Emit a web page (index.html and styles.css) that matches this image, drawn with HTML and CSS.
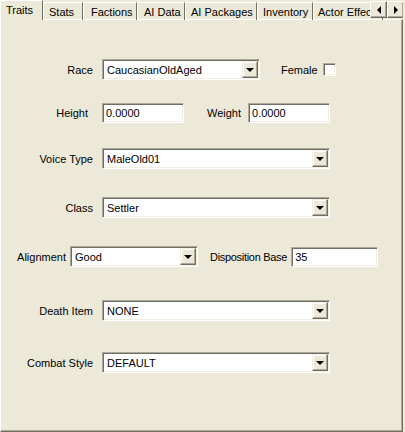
FILE: index.html
```html
<!DOCTYPE html>
<html lang="en">
<head>
  <meta charset="UTF-8">
  <title>Traits</title>
  <link rel="stylesheet" href="styles.css">
</head>
<body>
  <div class="window">
    <div class="tabs">
      <div class="tab active w-traits">Traits</div>
      <div class="tab w-stats">Stats</div>
      <div class="tab w-factions">Factions</div>
      <div class="tab w-aidata">AI Data</div>
      <div class="tab w-aipack">AI Packages</div>
      <div class="tab w-inv">Inventory</div>
      <div class="tab w-actor">Actor Effects</div>
      <div class="tab-scroll">
        <div class="scroll-btn"><span class="tri-left"></span></div>
        <div class="scroll-btn"><span class="tri-right"></span></div>
      </div>
    </div>

    <div class="panel">
      <div class="row row-race">
        <label class="lbl lbl-main">Race</label>
        <div class="combo w-race"><span class="combo-text">CaucasianOldAged</span><span class="drop"><span class="tri-down"></span></span></div>
        <label class="lbl lbl-female">Female</label>
        <span class="check"></span>
      </div>

      <div class="row row-height">
        <label class="lbl lbl-height">Height</label>
        <div class="field w-num">0.0000</div>
        <label class="lbl lbl-weight">Weight</label>
        <div class="field w-num">0.0000</div>
      </div>

      <div class="row row-voice">
        <label class="lbl lbl-main">Voice Type</label>
        <div class="combo w-wide"><span class="combo-text">MaleOld01</span><span class="drop"><span class="tri-down"></span></span></div>
      </div>

      <div class="row row-class">
        <label class="lbl lbl-main">Class</label>
        <div class="combo w-wide"><span class="combo-text">Settler</span><span class="drop"><span class="tri-down"></span></span></div>
      </div>

      <div class="row row-align">
        <label class="lbl lbl-align">Alignment</label>
        <div class="combo w-align"><span class="combo-text">Good</span><span class="drop"><span class="tri-down"></span></span></div>
        <label class="lbl lbl-disp">Disposition Base</label>
        <div class="field w-disp">35</div>
      </div>

      <div class="row row-death">
        <label class="lbl lbl-main">Death Item</label>
        <div class="combo w-wide"><span class="combo-text">NONE</span><span class="drop"><span class="tri-down"></span></span></div>
      </div>

      <div class="row row-combat">
        <label class="lbl lbl-main">Combat Style</label>
        <div class="combo w-wide"><span class="combo-text">DEFAULT</span><span class="drop"><span class="tri-down"></span></span></div>
      </div>
    </div>
  </div>
</body>
</html>
```

FILE: styles.css
```css
body {
  margin: 0;
  background-color: #ece9d8;
  font-family: Tahoma, 'Liberation Sans', Arial, sans-serif;
  font-size: 11px;
  color: #000;
}
.window {
  width: 403px;
  height: 432px;
  display: flex;
  flex-direction: column;
}
.tabs {
  position: relative;
  height: 20px;
  display: flex;
  overflow: hidden;
  flex-shrink: 0;
}
.tab {
  box-sizing: border-box;
  height: 18px;
  margin-top: 2px;
  padding: 3px 0 0 6px;
  border-top: 1px solid #fff;
  border-left: 1px solid #fff;
  border-right: 1px solid #716f64;
  white-space: nowrap;
  overflow: hidden;
  flex-shrink: 0;
}
.tab.active {
  height: 21px;
  margin-top: 0;
  padding-top: 3px;
  background-color: #ece9d8;
  z-index: 1;
}
.w-traits { width: 43px; padding-left: 5px; }
.w-stats { width: 40px; padding-left: 5px; }
.w-factions { width: 54px; padding-left: 7px; }
.w-aidata { width: 48px; }
.w-aipack { width: 72px; padding-left: 5px; }
.w-inv { width: 56px; padding-left: 5px; }
.w-actor { width: 70px; padding-left: 4px; }
.tab-scroll {
  position: absolute;
  right: -1px;
  top: 1px;
  display: flex;
  z-index: 2;
}
.scroll-btn {
  box-sizing: border-box;
  width: 17px;
  height: 17px;
  background-color: #ece9d8;
  border-top: 1px solid #fff;
  border-left: 1px solid #fff;
  border-right: 1px solid #716f64;
  border-bottom: 1px solid #716f64;
  box-shadow: inset -1px -1px 0 #aca899;
  display: flex;
  align-items: center;
  justify-content: center;
}
.tri-left {
  width: 0;
  height: 0;
  border-top: 4px solid transparent;
  border-bottom: 4px solid transparent;
  border-right: 4px solid #000;
}
.tri-right {
  width: 0;
  height: 0;
  border-top: 4px solid transparent;
  border-bottom: 4px solid transparent;
  border-left: 4px solid #000;
}
.panel {
  flex: 1;
  margin-top: -1px;
  border-top: 1px solid #fff;
  border-left: 1px solid #fff;
  border-right: 1px solid #716f64;
  border-bottom: 1px solid #716f64;
  box-shadow: inset -1px -1px 0 #aca899;
}
.row {
  display: flex;
  align-items: center;
}
.row-race { margin-top: 39px; }
.row-height { margin-top: 23px; }
.row-voice { margin-top: 25px; }
.row-class { margin-top: 28px; }
.row-align { margin-top: 28px; }
.row-death { margin-top: 33px; }
.row-combat { margin-top: 31px; }
.lbl {
  white-space: nowrap;
}
.lbl-main {
  width: 92px;
  margin-right: 9px;
  text-align: right;
}
.lbl-height {
  width: 87px;
  margin-right: 14px;
  text-align: right;
}
.lbl-weight {
  margin-left: 23px;
  margin-right: 7px;
}
.lbl-align {
  width: 65px;
  margin-right: 4px;
  text-align: right;
}
.lbl-disp {
  margin-left: 12px;
  margin-right: 4px;
  letter-spacing: -0.3px;
}
.lbl-female {
  margin-left: 21px;
  margin-right: 5px;
}
.check {
  box-sizing: border-box;
  width: 13px;
  height: 13px;
  background-color: #fff;
  border-top: 1px solid #aca899;
  border-left: 1px solid #aca899;
  border-right: 1px solid #fff;
  border-bottom: 1px solid #fff;
  box-shadow: inset 1px 1px 0 #716f64, inset -1px -1px 0 #f1efe2;
}
.combo, .field {
  box-sizing: border-box;
  height: 21px;
  background-color: #fff;
  border-top: 1px solid #aca899;
  border-left: 1px solid #aca899;
  border-right: 1px solid #fff;
  border-bottom: 1px solid #fff;
  box-shadow: inset 1px 1px 0 #716f64, inset -1px -1px 0 #f1efe2;
  display: flex;
  align-items: center;
}
.field {
  height: 20px;
  padding-left: 3px;
}
.combo-text {
  flex: 1;
  padding-left: 4px;
}
.drop {
  box-sizing: border-box;
  width: 16px;
  height: 17px;
  margin-right: 1px;
  background-color: #ece9d8;
  border-top: 1px solid #f1efe2;
  border-left: 1px solid #f1efe2;
  border-right: 1px solid #716f64;
  border-bottom: 1px solid #716f64;
  box-shadow: inset -1px -1px 0 #aca899, inset 1px 1px 0 #fff;
  display: flex;
  align-items: center;
  justify-content: center;
}
.tri-down {
  width: 0;
  height: 0;
  border-left: 4px solid transparent;
  border-right: 4px solid transparent;
  border-top: 4px solid #000;
  margin-left: -1px;
}
.w-race { width: 158px; }
.w-wide { width: 228px; }
.w-align { width: 128px; }
.w-num { width: 82px; }
.w-disp { width: 87px; }
```
